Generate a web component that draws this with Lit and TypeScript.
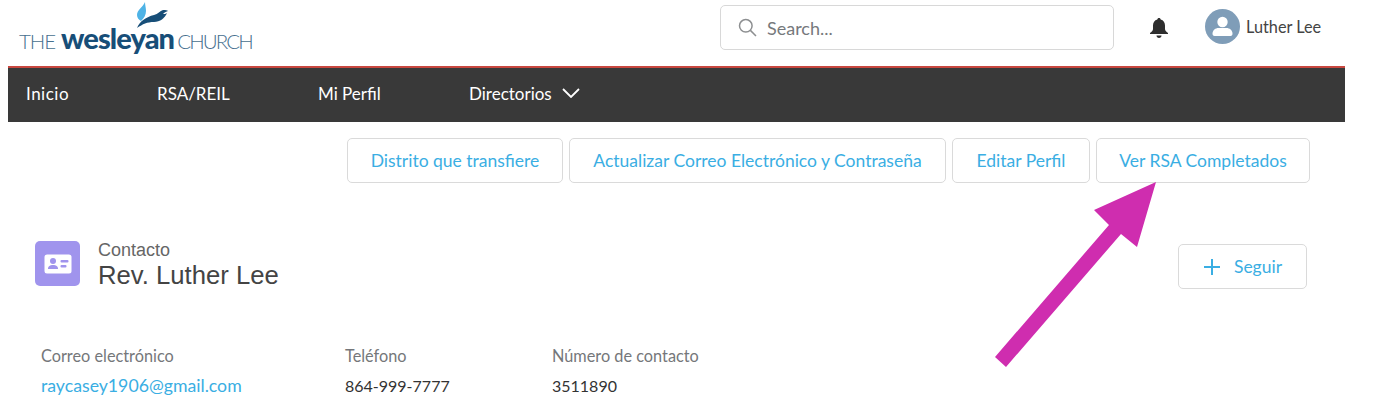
import { LitElement, html, css } from 'lit';
import { customElement } from 'lit/decorators.js';

@customElement('app-root')
export class AppRoot extends LitElement {
  static styles = css`
    :host {
      display: block;
      position: relative;
      width: 1377px;
      height: 405px;
      overflow: hidden;
      background: #fff;
      font-family: 'Lato', 'Open Sans', sans-serif;
      color: #3a3a3a;
    }
    * { box-sizing: border-box; }
    .top {
      height: 66px;
      margin-left: 8px;
      width: 1337px;
      display: flex;
      align-items: flex-start;
    }
    .logo {
      width: 246px;
      margin-left: 11px;
      position: relative;
      height: 66px;
    }
    .flame { position: absolute; left: 107px; top: 0; }
    .logo-text {
      position: absolute;
      left: 0;
      top: 20px;
      display: flex;
      align-items: baseline;
      color: #47708f;
      font-size: 20.5px;
      font-weight: 300;
      white-space: nowrap;
      letter-spacing: -1.1px;
    }
    .logo-text b {
      color: #174e78;
      font-size: 29px;
      font-weight: 900;
      margin: 0 3px 0 6px;
      letter-spacing: -0.9px;
    }
    .logo-text span { letter-spacing: -1.9px; }
    .search {
      margin-left: 455px;
      margin-top: 5px;
      width: 394px;
      height: 45px;
      border: 1px solid #d8d8d8;
      border-radius: 5px;
      display: flex;
      align-items: center;
      padding-left: 17px;
      gap: 10px;
      color: #76797c;
      font-size: 18px;
    }
    .bell { margin-left: 34px; margin-top: 17px; }
    .user {
      margin-left: 35px;
      margin-top: 9px;
      display: flex;
      align-items: center;
      gap: 6px;
      font-size: 16.3px;
      color: #444;
    }
    nav {
      margin-left: 8px;
      width: 1337px;
      height: 56px;
      background: #393939;
      border-top: 2px solid #c8473f;
      display: flex;
      align-items: center;
      color: #fff;
      font-size: 17px;
      padding: 0 0 4px 18px;
    }
    nav span { display: flex; align-items: center; gap: 10px; }
    nav span:nth-child(1) { width: 131px; letter-spacing: 0.5px; }
    nav span:nth-child(2) { width: 161px; }
    nav span:nth-child(3) { width: 151px; }
    .actions {
      display: flex;
      justify-content: flex-end;
      gap: 6px;
      width: 1310px;
      margin-top: 16px;
    }
    .btn {
      height: 45px;
      border: 1px solid #dadada;
      border-radius: 5px;
      color: #3aaee3;
      font-size: 17.5px;
      display: flex;
      align-items: center;
      justify-content: center;
      background: #fff;
    }
    .title-row {
      display: flex;
      margin-top: 58px;
      width: 1272px;
      margin-left: 35px;
      align-items: flex-start;
      justify-content: space-between;
    }
    .id { display: flex; gap: 18px; }
    .badge {
      width: 45px;
      height: 45px;
      border-radius: 5px;
      background: #a094ed;
      display: flex;
      align-items: center;
      justify-content: center;
    }
    .names { font-family: 'Liberation Sans', Arial, sans-serif; color: #4a4a4a; }
    .kicker { font-size: 18px; line-height: 18px; color: #666; }
    .name { font-size: 25.7px; line-height: 33px; color: #444; }
    .follow { width: 129px; gap: 13px; margin-top: 3px; }
    .fields {
      display: grid;
      grid-template-columns: 304px 207px 200px;
      margin-left: 41px;
      margin-top: 53px;
      font-size: 16.3px;
      row-gap: 9px;
    }
    .label { color: #75777a; line-height: 21px; }
    .value { color: #333; line-height: 21px; font-size: 16px; }
    .link { color: #3aaee3; font-size: 17.7px; }
    .arrow { position: absolute; left: 985px; top: 170px; pointer-events: none; }
  `;

  render() {
    return html`
      <div class="top">
        <div class="logo">
          <svg class="flame" width="56" height="30" viewBox="0 0 56 30">
            <path d="M19 2C17 7 11 10 11 15c0 3 2 5 4 6 3-3 5-6 5-10 0-3-1-6-1-9z" fill="#4eb3e6" />
            <path d="M11 28c3-7 9-11 17-13 4-1 6-4 9-5 3 0 4 0 5 1-3 1-4 2-5 3 1 0 3 0 4-1-2 5-7 9-13 9-7 0-11 2-17 6z" fill="#174e78" />
          </svg>
          <div class="logo-text">THE<b>wesleyan</b><span>CHURCH</span></div>
        </div>
        <div class="search">
          <svg width="19" height="19" viewBox="0 0 19 19" fill="none" stroke="#8d8f91" stroke-width="1.5">
            <circle cx="7.8" cy="7.8" r="6.3" />
            <path d="M12.4 12.4l5.6 5.6" />
          </svg>
          <span>Search...</span>
        </div>
        <svg class="bell" width="22" height="22" viewBox="0 0 22 22" fill="#2e2e2e">
          <path d="M11 1c1 0 1.6.7 1.7 1.6C15.5 3.4 17 5.700 17 8.500v3.500c0 1.500 1 2.500 3 4v1H2v-1c2-1.500 3-2.500 3-4V8.500c0-2.800 1.500-5.100 4.300-5.900C9.400 1.700 10 1 11 1z" />
          <path d="M8.500 18.500h5c0 1.500-1 2.500-2.500 2.500s-2.500-1-2.500-2.500z" />
        </svg>
        <div class="user">
          <svg width="35" height="35" viewBox="0 0 35 35">
            <circle cx="17.500" cy="17.500" r="17.500" fill="#7f9db8" />
            <circle cx="17.500" cy="13" r="5.200" fill="#fff" />
            <path d="M7.500 25c0-4 3-6 6-6h8c3 0 6 2 6 6 0 1-1 2-2 2H9.500c-1 0-2-1-2-2z" fill="#fff" />
          </svg>
          <span>Luther Lee</span>
        </div>
      </div>
      <nav>
        <span>Inicio</span>
        <span>RSA/REIL</span>
        <span>Mi Perfil</span>
        <span>Directorios
          <svg width="18" height="10" viewBox="0 0 18 10" fill="none" stroke="#fff" stroke-width="1.800">
            <path d="M1 1l8 8 8-8" />
          </svg>
        </span>
      </nav>
      <div class="actions">
        <div class="btn" style="width:216px">Distrito que transfiere</div>
        <div class="btn" style="width:377px">Actualizar Correo Electrónico y Contraseña</div>
        <div class="btn" style="width:138px">Editar Perfil</div>
        <div class="btn" style="width:214px">Ver RSA Completados</div>
      </div>
      <div class="title-row">
        <div class="id">
          <div class="badge">
            <svg width="28" height="20" viewBox="0 0 28 20">
              <rect x="0.500" y="0.500" width="27" height="19" rx="2.500" fill="#fff" />
              <circle cx="9" cy="7" r="3" fill="#a094ed" />
              <path d="M4 15c0-3 2-4 5-4s5 1 5 4z" fill="#a094ed" />
              <rect x="16.500" y="6" width="8" height="2.500" rx="1" fill="#a094ed" />
              <rect x="16.500" y="11" width="6" height="2.500" rx="1" fill="#a094ed" />
            </svg>
          </div>
          <div class="names">
            <div class="kicker">Contacto</div>
            <div class="name">Rev. Luther Lee</div>
          </div>
        </div>
        <div class="btn follow">
          <svg width="18" height="18" viewBox="0 0 18 18" stroke="#3aaee3" stroke-width="2">
            <path d="M9 1v16M1 9h16" />
          </svg>
          <span>Seguir</span>
        </div>
      </div>
      <div class="fields">
        <div class="label">Correo electrónico</div>
        <div class="label">Teléfono</div>
        <div class="label">Número de contacto</div>
        <div class="value link">raycasey1906@gmail.com</div>
        <div class="value">864-999-7777</div>
        <div class="value">3511890</div>
      </div>
      <svg class="arrow" width="190" height="210" viewBox="985 170 190 210">
        <path d="M1156 182L1094 210L1109 225L995 357L1006 367L1121 234L1137 247Z" fill="#cf2daf" />
      </svg>
    `;
  }
}
